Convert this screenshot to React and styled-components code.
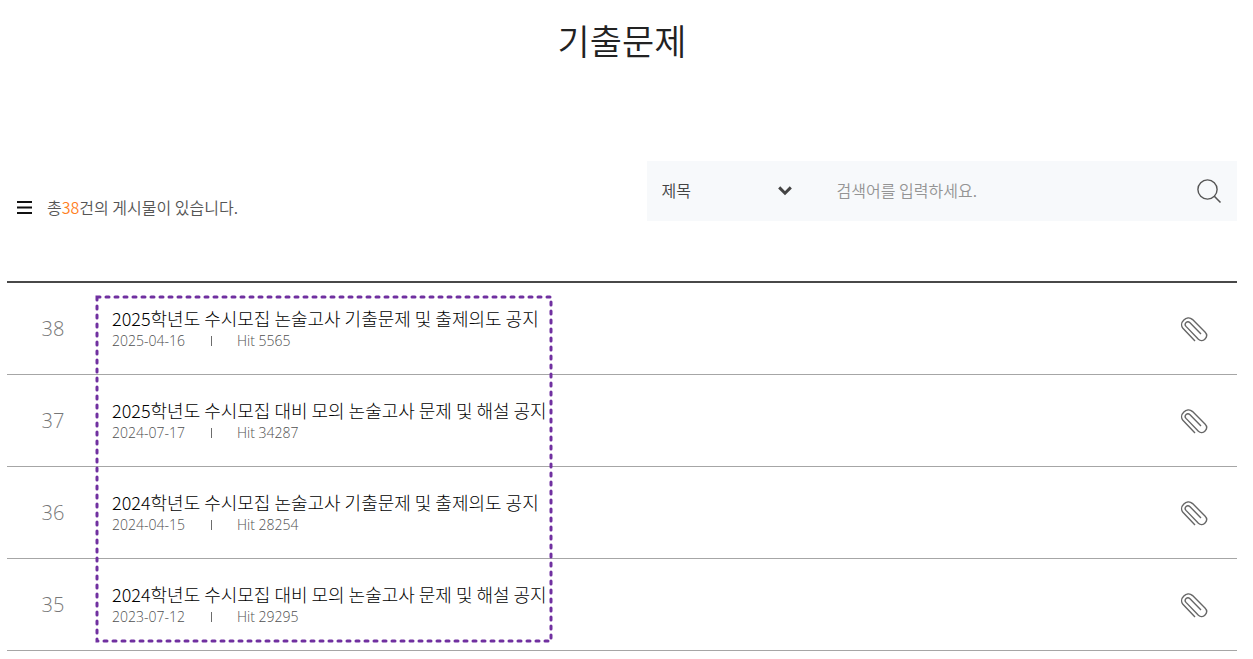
import React from "react";
import styled, { createGlobalStyle } from "styled-components";

const GlobalStyle = createGlobalStyle`
  *, *::before, *::after { box-sizing: border-box; }
  body {
    margin: 0;
    background: #fff;
    color: #222;
    font-family: "Noto Sans CJK KR", sans-serif;
    font-weight: 350;
  }
  a { color: inherit; text-decoration: none; }
`;

const latinFont = `"Open Sans", "Noto Sans CJK KR", sans-serif`;

const Page = styled.main`
  padding: 14px 16px 8px 7px;
`;

const Title = styled.h1`
  margin: 0;
  font-size: 35px;
  font-weight: 350;
  line-height: 52px;
  text-align: center;
`;

const Toolbar = styled.div`
  display: flex;
  align-items: center;
  justify-content: space-between;
  margin-top: 95px;
`;

const Total = styled.p`
  display: flex;
  align-items: center;
  gap: 15px;
  margin: 32px 0 0 10px;
  font-size: 16px;
  line-height: 28px;
  color: #555;
`;

const Count = styled.strong`
  font-weight: 350;
  color: #ff7f1e;
`;

const Search = styled.form`
  display: flex;
  align-items: center;
  width: 48%;
  height: 60px;
  background: #f7f9fb;
`;

const SelectBox = styled.div`
  display: grid;
  align-items: center;
  flex: 0 0 175px;
  height: 100%;

  & > * { grid-area: 1 / 1; }
  & > svg { justify-self: end; margin-right: 30px; pointer-events: none; }
`;

const Select = styled.select`
  width: 100%;
  height: 100%;
  padding: 0 15px 2px;
  border: 0;
  background: transparent;
  appearance: none;
  font: inherit;
  font-size: 16px;
  color: #444;
`;

const Keyword = styled.input`
  flex: 1;
  min-width: 0;
  height: 100%;
  padding: 0 15px 2px;
  border: 0;
  background: transparent;
  font: inherit;
  font-size: 16px;
  color: #333;

  &::placeholder { color: #949494; opacity: 1; }
`;

const SearchButton = styled.button`
  display: flex;
  align-items: center;
  justify-content: center;
  width: 56px;
  height: 100%;
  padding: 0;
  border: 0;
  background: transparent;
  cursor: pointer;
`;

const Board = styled.div`
  position: relative;
  margin-top: 60px;
`;

const List = styled.ul`
  margin: 0;
  padding: 0;
  list-style: none;
  border-top: 2px solid #484848;
`;

const Row = styled.li`
  display: flex;
  align-items: center;
  height: 92px;
  border-bottom: 1px solid #a6a6a6;
`;

const Number = styled.span`
  flex: 0 0 92px;
  font-family: ${latinFont};
  font-size: 20px;
  font-weight: 300;
  text-align: center;
  color: #777;
`;

const Post = styled.div`
  flex: 1;
  padding: 0 13px;
`;

const PostTitle = styled.a`
  display: block;
  font-size: 18px;
  font-weight: 300;
  line-height: 24px;
  color: #000;
`;

const Meta = styled.div`
  display: flex;
  align-items: center;
  font-family: ${latinFont};
  font-size: 14px;
  font-weight: 300;
  line-height: 22px;
  color: #505050;
`;

const Hit = styled.span`
  display: flex;
  align-items: center;

  &::before {
    content: "";
    width: 1px;
    height: 10px;
    margin: 0 25px 0 26px;
    background: #6c6c6c;
  }
`;

const Attachment = styled.a`
  display: flex;
  margin: 2px 29px 0 0;
`;

const Highlight = styled.svg`
  position: absolute;
  top: 14px;
  left: 88px;
  width: 458px;
  height: 348px;
  pointer-events: none;
`;

const posts = [
  { no: 38, title: "2025학년도 수시모집 논술고사 기출문제 및 출제의도 공지", date: "2025-04-16", hit: 5565 },
  { no: 37, title: "2025학년도 수시모집 대비 모의 논술고사 문제 및 해설 공지", date: "2024-07-17", hit: 34287 },
  { no: 36, title: "2024학년도 수시모집 논술고사 기출문제 및 출제의도 공지", date: "2024-04-15", hit: 28254 },
  { no: 35, title: "2024학년도 수시모집 대비 모의 논술고사 문제 및 해설 공지", date: "2023-07-12", hit: 29295 },
];

const MenuIcon = () => (
  <svg width="15" height="14" viewBox="0 0 15 14" aria-hidden="true">
    <path d="M0 2h15M0 7.5h15M0 13h15" stroke="#111" strokeWidth="2" />
  </svg>
);

const ChevronIcon = () => (
  <svg width="14" height="10" viewBox="0 0 14 10" fill="none" aria-hidden="true">
    <path d="M1.2 1.4 7 7.2l5.8-5.8" stroke="#444" strokeWidth="3" />
  </svg>
);

const SearchIcon = () => (
  <svg width="26" height="26" viewBox="0 0 26 26" fill="none" aria-hidden="true">
    <circle cx="11.5" cy="11.5" r="9.6" stroke="#555" strokeWidth="1.4" />
    <path d="M18.3 18.3l6.2 6.2" stroke="#555" strokeWidth="1.6" />
  </svg>
);

const ClipIcon = () => (
  <svg width="28" height="28" viewBox="0 0 28 28" fill="none" aria-hidden="true">
    <path
      d="M15 25 2.9 12.3C-1.5 7.2 6.6-1.6 12.6 3.6L25 16c4.6 4.8-2.3 11.2-6.6 7.2L6 10.4C3.6 7.6 7.3 4 10 6.7L21 18"
      stroke="#666"
      strokeWidth="1.4"
    />
  </svg>
);

export default function App() {
  return (
    <>
      <GlobalStyle />
      <Page>
        <Title>기출문제</Title>
        <Toolbar>
          <Total>
            <MenuIcon />
            <span>
              총<Count>38</Count>건의 게시물이 있습니다.
            </span>
          </Total>
          <Search onSubmit={(e) => e.preventDefault()}>
            <SelectBox>
              <Select aria-label="검색 조건">
                <option>제목</option>
              </Select>
              <ChevronIcon />
            </SelectBox>
            <Keyword type="text" aria-label="검색어" placeholder="검색어를 입력하세요." />
            <SearchButton type="submit" aria-label="검색">
              <SearchIcon />
            </SearchButton>
          </Search>
        </Toolbar>
        <Board>
          <List>
            {posts.map((post) => (
              <Row key={post.no}>
                <Number>{post.no}</Number>
                <Post>
                  <PostTitle href="#">{post.title}</PostTitle>
                  <Meta>
                    <span>{post.date}</span>
                    <Hit>Hit {post.hit}</Hit>
                  </Meta>
                </Post>
                <Attachment href="#" aria-label="첨부파일">
                  <ClipIcon />
                </Attachment>
              </Row>
            ))}
          </List>
          <Highlight viewBox="0 0 458 348" aria-hidden="true">
            <rect
              x="2"
              y="2"
              width="454"
              height="344"
              fill="none"
              stroke="#7030a0"
              strokeWidth="3"
              strokeLinecap="round"
              strokeDasharray="3 6"
            />
          </Highlight>
        </Board>
      </Page>
    </>
  );
}
